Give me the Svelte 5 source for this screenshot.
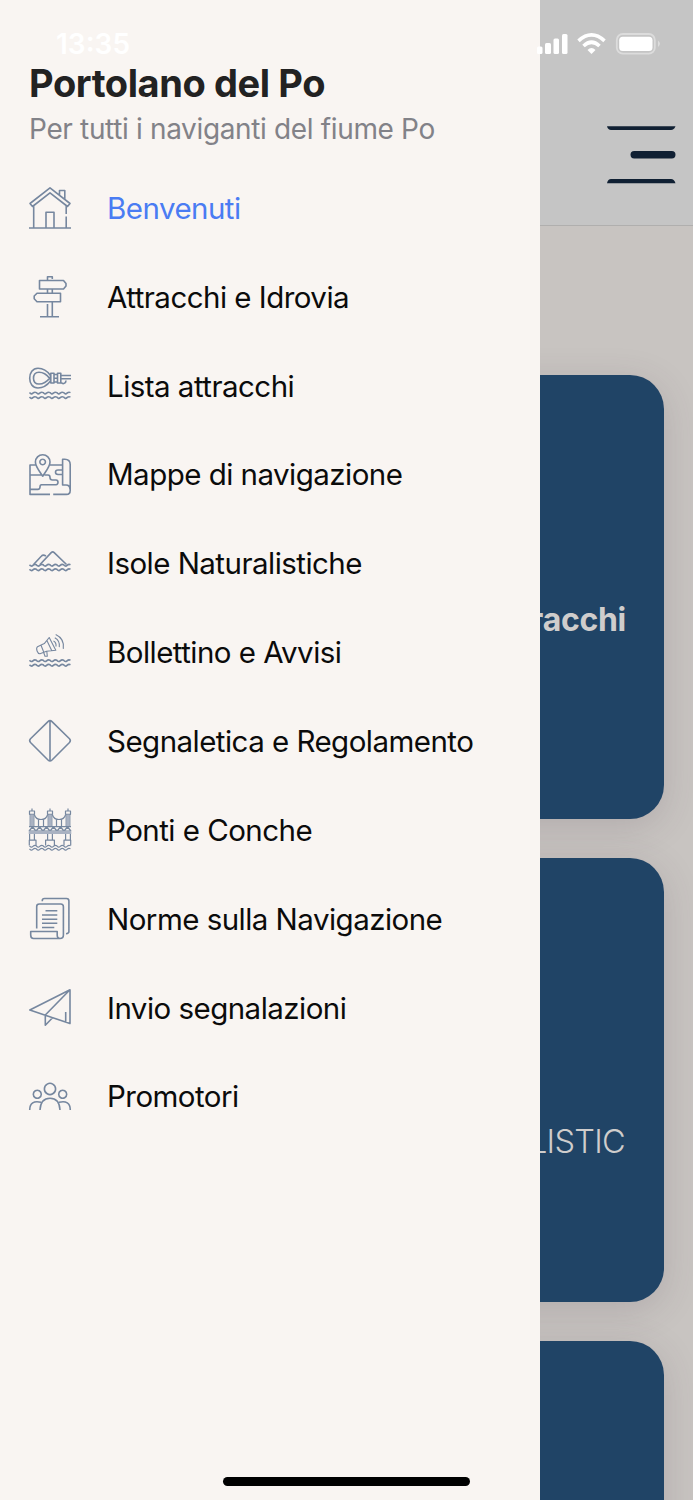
<script>
  // one wavy water line, 42 wide, centred on y
  function wave(y) {
    let d = `M.5 ${y}`;
    for (let i = 0; i < 6; i++) {
      d += `q1.7 2.200 3.400 .6t3.430 -.6`;
    }
    return d;
  }

  const items = [
    {
      label: 'Benvenuti',
      active: true,
      paths: ['M21 .8 41 16.5 38.5 19.5 21 5.8 3.5 19.5 1 16.5ZM30.5 8V3.5H35.8V12M4.7 18.8V40.8M37.2 18.8V27M37.2 29.5V40.8M0 41H42M17 40.500V25.2H25V40.500'],
    },
    {
      label: 'Attracchi e Idrovia',
      paths: ['M18.5 4V.8H23.3V3M10.5 4.5H34.5L37 7.5V10L34.5 13H10.5ZM31.5 17.2H8L5.2 20V22.8L8 25.7H31.5ZM18.5 13V17M23.3 13V17M18.5 28V40.5M23.3 26V40.5M11 40.7H30'],
    },
    {
      label: 'Lista attracchi',
      paths: [
        'M21.5 10.5C17 4 12 3.2 9 3.2 3.5 3.2.7 8 .7 13.2S3.5 23 9 23C12 23 17 21.8 21.5 16ZM20.5 13.2C17 8.5 13 7.2 10 7.2 6 7.2 4.5 10 4.5 13.2S6 19 10 19C13 19 17 18 20.5 13.2ZM21.8 8.2H25V18H21.8ZM25 9.5H28.5V17H25M28.5 8.2H31.8V18H28.5ZM25 13.2H28.5M31.8 10.5H42M31.8 13.8H42M32 17.5C34 19.5 37 18.5 37 15.5',
        wave(27.6),
        wave(32.1),
      ],
    },
    {
      label: 'Mappe di navigazione',
      paths: ['M13.7 22.2C10 16.5 6.4 12.5 6.4 8A7.3 7.3 0 0 1 21 8C21 12.5 17.4 16.5 13.7 22.2ZM13.7 5.2A2.8 2.8 0 1 1 13.6 5.2M6.8 11H1V40.4H21M20.5 11H33.5M24.2 40.4H37.5Q41.2 40.4 41.2 36.5V10.5Q41.2 5.2 35.8 5.2H33.6V31H37Q41 31 41 35.5M1 21H12.5M15.5 21H19Q21 21 21 23.5T23.5 26H27Q29 26 29 28.3T27 30.7H12.5Q11 30.7 11 33T8.7 35.4H1M33.5 16H29Q26.5 16 26.5 18.2T29 20.5H33.5'],
    },
    {
      label: 'Isole Naturalistiche',
      paths: [
        'M11 21.5 22.2 9.6Q23.7 8.2 25.2 9.6L37.5 21.5M4.8 21.3 12.5 13Q14 11.3 17 13',
        wave(21.8),
        wave(26.3),
      ],
    },
    {
      label: 'Bollettino e Avvisi',
      thin: ['M20.2 5.5 26.8 18.2 17.5 19.2 11 21.7C8.5 22 6.5 16.5 8.5 14.7L15.3 11.6ZM12 13.3 14.8 20.3M18 8.8 22.8 18.8M14.7 20.5 16 24.3H18.3L17.8 19.3M24.5 9Q27.5 10.5 27 14.5M25.8 5.8Q31.2 8.8 30.3 15.2M26.7 2.5Q35.8 6.8 34.3 16.8'],
      paths: [wave(28.2), wave(32.8)],
    },
    {
      label: 'Segnaletica e Regolamento',
      paths: ['M19 1.6Q21 -.3 23 1.6L40.5 18.8Q42.2 20.7 40.5 22.5L23 40Q21 41.9 19 40L1.5 22.5Q-.2 20.7 1.5 18.8ZM21 1V40.5'],
    },
    {
      label: 'Ponti e Conche',
      bridge: true,
      paths: [],
    },
    {
      label: 'Norme sulla Navigazione',
      paths: ['M13.3 3.2V2.5Q13.3.5 15.5.5H37.5Q39.9.5 39.9 3V33.5Q39.9 35.5 37 35.7M7.7 30.5V8.5Q7.7 6 10.3 6H31.8Q34.4 6 34.4 8.7V37Q34.4 40.5 31 40.5H4.5Q1.7 40.5 1.7 37V33.5H28.2V37Q28.2 40.5 31.2 40.5M16.5 12.8H28.3M13 17H28.3M13 21.2H28.3M13 25.2H28.3M13 29.5H25.3'],
    },
    {
      label: 'Invio segnalazioni',
      paths: ['M.8 23 41 2.8V36.6ZM41 2.8 16.3 28V38.3L23.3 31M36.7 25V35'],
    },
    {
      label: 'Promotori',
      paths: ['M26.6 13A5.6 5.6 0 1 1 26.6 12.9M12.3 18.3A4 4 0 1 1 12.3 18.2M37.7 18.3A4 4 0 1 1 37.7 18.2M11 34C11.5 26 15 22.3 21 22.3S30.5 26 31 34M.7 34C.7 27 5 24.5 12 26.3M41.3 34C41.3 27 37 24.5 30 26.3'],
    },
  ];

  const towers = [3, 21, 39];
</script>

<div class="screen">
  <div class="page">
    <header class="topbar">
      <svg class="burger" width="70" height="60" viewBox="0 0 70 60">
        <path d="M1 1.2H69.5Q68 5 65 5H5Q2 5 1 1.2Z" />
        <rect x="24.5" y="26" width="45" height="7.5" rx="3.7" />
        <path d="M1 58.2H69.5Q68 54 65 54H5Q2 54 1 58.2Z" />
      </svg>
    </header>
    <main class="cards">
      <div class="card first"><b>Lista attracchi</b></div>
      <div class="card second"><span>ISOLE NATURALISTIC</span></div>
      <div class="card"></div>
    </main>
  </div>

  <aside class="drawer">
    <h1>Portolano del Po</h1>
    <p class="note">Per tutti i naviganti del fiume Po</p>
    <nav>
      {#each items as item}
        <div class="item" class:active={item.active}>
          <svg class="icon" width="42" height="42" viewBox="0 0 42 42">
            {#each item.paths as d}
              <path {d} />
            {/each}
            {#if item.thin}
              {#each item.thin as d}
                <path class="thin" {d} />
              {/each}
            {/if}
            {#if item.bridge}
              <g class="bridge">
                {#each towers as x}
                  <path d="M{x} -.5V2M{x - 2.5} 2H{x + 2.5}V5.3H{x - 2.5}ZM{x - 1.8} 5.3V17.5M{x + 1.8} 5.3V17.5M{x - 2.4} 25V31M{x + 2.4} 25V31" />
                  <rect class="fill" x={x - 1.6} y="5.5" width="3.2" height="12" />
                {/each}
                <path d="M.3 36.5V31.2H7V36.5M16.600 36.5V31.2H25.400V36.5M35 36.5V31.2H41.700V36.5" />
                <path d="M5.500 6C6.500 9.500 9 10.500 12 10.500S17.500 9.500 18.500 6M23.500 6C24.500 9.500 27 10.500 30 10.500S35.500 9.500 36.500 6M9.500 10V17.500M14.500 10V17.500M27.500 10V17.500M32.500 10V17.500" />
                <path d="M0 17.7H42M0 22H42M0 22 3.5 18 7 22 10.5 18 14 22 17.5 18 21 22 24.5 18 28 22 31.5 18 35 22 38.5 18 42 22" />
                <rect class="fill" x="-.3" y="21.8" width="42.6" height="3.2" />
                <path d={wave(36.8)} />
                <path d={wave(39.8)} />
              </g>
            {/if}
          </svg>
          <span>{item.label}</span>
        </div>
      {/each}
    </nav>
  </aside>

  <div class="statusbar">
    <span class="clock">13:35</span>
    <svg width="124" height="24" viewBox="0 0 124 24">
      <rect x="0" y="14.5" width="5.500" height="7.5" rx="1.5" />
      <rect x="8" y="11" width="6" height="11" rx="1.5" />
      <rect x="16.5" y="6.5" width="5.500" height="15.5" rx="1.5" />
      <rect x="25" y="2" width="5.500" height="20" rx="1.5" />
      <path class="arc" d="M41.5 8.800Q54.500 -3 67.500 8.800M46.500 14Q54.500 6.500 62.500 14" />
      <path d="M50.500 18Q54.500 14 58.500 18L54.500 22Z" />
      <rect class="shell" x="79.800" y="2" width="38" height="19.700" rx="6" />
      <rect x="82.200" y="4.800" width="33.300" height="14.200" rx="3.500" />
      <path class="tip" d="M121 8.500Q125 11.800 121 15Z" />
    </svg>
  </div>

  <div class="home"></div>
</div>

<style>
  :global(body) {
    margin: 0;
  }

  .screen {
    position: relative;
    width: 693px;
    height: 1500px;
    overflow: hidden;
    font-family: Inter, Roboto, sans-serif;
  }

  .page {
    height: 1500px;
    background: #c8c4c1;
    overflow: hidden;
  }

  .topbar {
    box-sizing: border-box;
    height: 226px;
    padding: 125px 17px 0 0;
    display: flex;
    justify-content: flex-end;
    align-items: flex-start;
    background: #c5c5c5;
    border-bottom: 1px solid #b0afae;
  }

  .burger {
    fill: #102033;
  }

  .cards {
    display: flex;
    flex-direction: column;
    gap: 39px;
    padding: 149px 29px 0;
  }

  .card {
    box-sizing: border-box;
    flex: none;
    height: 444px;
    padding-right: 38px;
    border-radius: 34px;
    background: #204466;
    box-shadow: 0 8px 36px rgba(75, 60, 75, 0.18);
    color: #cfcdcc;
    text-align: right;
    white-space: nowrap;
  }

  .first {
    padding-top: 225px;
    font-size: 32px;
    line-height: 40px;
    letter-spacing: -0.3px;
  }

  .second {
    padding-top: 264px;
    padding-right: 39px;
    font-size: 32.5px;
    font-weight: 300;
    line-height: 40px;
    letter-spacing: -0.7px;
  }

  .drawer {
    position: absolute;
    top: 0;
    left: 0;
    box-sizing: border-box;
    width: 540px;
    height: 1500px;
    padding: 60px 29px 0;
    background: #f9f5f2;
  }

  h1 {
    margin: 0;
    font-size: 38px;
    font-weight: 700;
    line-height: 46px;
    letter-spacing: -0.4px;
    color: #222;
  }

  .note {
    margin: 5px 0 0;
    font-size: 28px;
    line-height: 36px;
    letter-spacing: -0.35px;
    color: #828288;
  }

  nav {
    margin-top: 17px;
  }

  .item {
    display: flex;
    align-items: center;
    gap: 36px;
    height: 88.85px;
    font-size: 29.5px;
    letter-spacing: -0.53px;
    white-space: nowrap;
    color: #0b0b0b;
  }

  .item span {
    padding-bottom: 1px;
  }

  .active {
    color: #4a7cf3;
  }

  .icon {
    flex: none;
    overflow: visible;
    fill: none;
    stroke: #76879f;
    stroke-width: 1.6;
    stroke-linejoin: round;
  }

  .thin {
    stroke-width: 1.1;
  }

  .bridge {
    stroke-width: 1.2;
  }

  .bridge .fill {
    fill: #a9b2c2;
    stroke: none;
  }

  .statusbar {
    position: absolute;
    top: 32px;
    left: 56px;
    right: 32px;
    display: flex;
    justify-content: space-between;
    fill: #fff;
  }

  .clock {
    font-size: 28px;
    font-weight: 600;
    line-height: 25px;
    color: #fff;
  }

  .arc {
    fill: none;
    stroke: #fff;
    stroke-width: 3.6;
  }

  .shell {
    fill: none;
    stroke: #dcdcdc;
    stroke-width: 1.8;
  }

  .tip {
    fill: #dcdcdc;
  }

  .home {
    position: absolute;
    left: 223px;
    bottom: 14px;
    width: 247px;
    height: 9px;
    border-radius: 5px;
    background: #000;
  }
</style>
